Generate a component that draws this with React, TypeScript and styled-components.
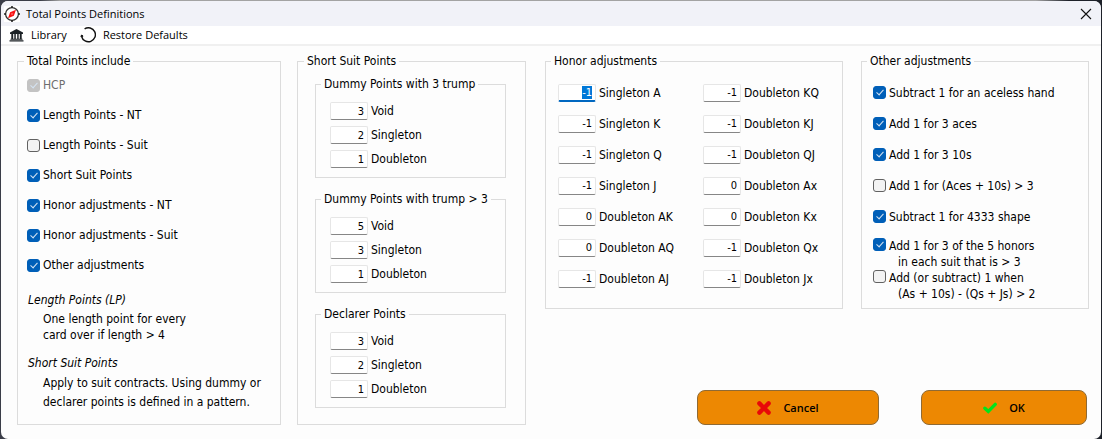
import React, { useEffect, useId, useRef } from "react";
import styled, { createGlobalStyle } from "styled-components";

const GlobalStyle = createGlobalStyle`
  *, *::before, *::after { box-sizing: border-box; }
  body {
    margin: 0;
    color: #000;
    font-family: "DejaVu Sans Condensed", "DejaVu Sans", sans-serif;
    font-size: 12px;
    line-height: 16px;
  }
`;

const uiFont = `"Open Sans", "Noto Sans", sans-serif`;

const Desktop = styled.div`
  min-height: 100vh;
  display: flex;
  padding: 1px;
  background: linear-gradient(90deg, #3a3d48 0, #3a3d48 40px, #a3a3a3 60px, #a3a3a3 94%, #1d2129 97%);
`;

const Window = styled.main`
  flex: 1;
  min-width: 0;
  display: flex;
  flex-direction: column;
  overflow: hidden;
  border-radius: 7px;
  background: #fdfdfd;
`;

const TitleBar = styled.header`
  display: flex;
  align-items: center;
  gap: 6px;
  height: 25px;
  padding: 0 9px 0 3px;
  background: #f1f2f8;
  font-family: ${uiFont};
`;

const Title = styled.h1`
  flex: 1;
  margin: 0;
  font-size: 11px;
  font-weight: 400;
`;

const PlainButton = styled.button`
  display: flex;
  align-items: center;
  gap: 7px;
  padding: 0;
  border: 0;
  background: none;
  color: inherit;
  font: inherit;
`;

const MenuBar = styled.nav`
  display: flex;
  align-items: center;
  gap: 13px;
  height: 20px;
  padding-left: 8px;
  border-bottom: 2px solid #f0f0f0;
  background: #fff;
  font-family: ${uiFont};
  font-size: 11px;
`;

const Content = styled.div`
  flex: 1;
  display: grid;
  grid-template-columns: minmax(0, 509fr) minmax(0, 544fr);
  gap: 19px;
  padding: 7px 12px 14px 16px;
`;

const LeftPanels = styled.div`
  display: grid;
  grid-template-columns: minmax(0, 264fr) minmax(0, 229fr);
  gap: 16px;
`;

const RightSide = styled.div`
  display: flex;
  flex-direction: column;
  justify-content: space-between;
`;

const RightPanels = styled.div`
  display: grid;
  grid-template-columns: minmax(0, 298fr) minmax(0, 228fr);
  gap: 18px;
`;

const Group = styled.fieldset<{ $pad: string }>`
  min-width: 0;
  margin: 0;
  padding: ${(p) => p.$pad};
  border: 1px solid #dcdcdc;
`;

const Legend = styled.legend<{ $shift?: number }>`
  margin-left: ${(p) => p.$shift ?? 0}px;
  padding: 0 3px;
  line-height: 16px;
  white-space: nowrap;
`;

const CheckRow = styled.label<{ $height: number; $muted?: boolean }>`
  display: flex;
  align-items: center;
  gap: 3px;
  height: ${(p) => p.$height}px;
  color: ${(p) => (p.$muted ? "#6d6d6d" : "#000")};
  white-space: nowrap;
`;

const TallCheckRow = styled(CheckRow)`
  align-items: flex-start;
`;

const TallCheckList = styled.div`
  padding-top: 6px;
`;

const SecondLine = styled.span`
  display: block;
  padding-left: 9px;
`;

const Box = styled.input`
  appearance: none;
  flex: none;
  display: flex;
  align-items: center;
  justify-content: center;
  width: 13px;
  height: 13px;
  margin: 0;
  border: 1px solid #626262;
  border-radius: 3px;
  background: #f3f3f3;

  &:checked {
    border-color: #005fb8;
    background: #005fb8;
  }
  &:checked::before {
    content: "";
    width: 4px;
    height: 7px;
    margin-bottom: 2px;
    border: solid #d5e4f3;
    border-width: 0 1px 1px 0;
    transform: rotate(42deg);
  }
  &:disabled {
    border-color: #c3c3c3;
    background: #c3c3c3;
  }
`;

const NoteHeading = styled.h2`
  margin: 12px 0 3px 1px;
  font-size: 12px;
  font-weight: 400;
  font-style: italic;
`;

const Note = styled.p<{ $line: number }>`
  margin: 0;
  padding-left: 16px;
  line-height: ${(p) => p.$line}px;
  white-space: nowrap;
`;

const Stack = styled.div`
  display: grid;
  gap: 13px;
`;

const HonorGrid = styled.div`
  display: grid;
  grid-template-columns: minmax(0, 145fr) minmax(0, 139fr);
`;

const FieldRow = styled.div<{ $height: number }>`
  display: flex;
  align-items: center;
  gap: 3px;
  height: ${(p) => p.$height}px;
  white-space: nowrap;
`;

const NumberBox = styled.input`
  flex: none;
  width: 38px;
  height: 18px;
  padding: 0 3px;
  border: 1px solid #e6e6e6;
  border-bottom-color: #868686;
  border-radius: 2px;
  outline: 0;
  background: #fff;
  color: #000;
  font-family: inherit;
  font-size: 11px;
  text-align: right;

  &:focus {
    border-bottom: 2px solid #0067c0;
  }
  &::selection {
    background: #0078d7;
    color: #fff;
  }
`;

const Actions = styled.div`
  display: flex;
  justify-content: flex-end;
  gap: 42px;
  padding-right: 2px;
`;

const ActionButton = styled.button<{ $width: number }>`
  display: flex;
  align-items: center;
  justify-content: center;
  gap: 12px;
  width: ${(p) => p.$width}px;
  height: 35px;
  border: 1px solid #8f6a35;
  border-radius: 8px;
  background: #ed8802;
  color: #000;
  font-family: ${uiFont};
  font-size: 11px;
  font-weight: 600;
`;

const CompassIcon = () => (
  <svg width="16" height="16" viewBox="0 0 16 16" aria-hidden="true">
    <rect width="16" height="16" fill="#fff" />
    <circle cx="8" cy="8" r="6.4" fill="none" stroke="#333" strokeWidth="1.3" />
    <path d="M8 0v2M8 14v2M0 8h2M14 8h2" stroke="#222" strokeWidth="1.6" />
    <path d="M12 3.8 9.9 9.7 4 12.2 6.1 6.3Z" fill="#f81414" />
    <circle cx="8" cy="8" r=".7" fill="#fbb" />
  </svg>
);

const LibraryIcon = () => (
  <svg width="15" height="13" viewBox="0 0 15 13" fill="#1c2226" aria-hidden="true">
    <path d="M7.5 0 14 3.4V5H1V3.4Z" />
    <path d="M2.3 5h1.9v5H2.3zM5.3 5h1.5v5H5.3zM8.2 5h1.5v5H8.2zM10.8 5h1.9v5h-1.9z" />
    <path d="M1.5 9.7h12v1.1h-12zM.5 11.2h14v1.3H.5z" />
  </svg>
);

const RestoreIcon = () => (
  <svg width="16" height="16" viewBox="0 0 16 16" fill="none" stroke="#111" aria-hidden="true">
    <path d="M4.6 1.9A7 7 0 1 1 1.6 9.5" strokeWidth="1.4" />
    <path d="M.8 9.4 1.7 8l1.4 1.2Z" fill="#111" strokeWidth="1" />
  </svg>
);

const CloseIcon = () => (
  <svg width="12" height="12" viewBox="0 0 12 12" stroke="#111" strokeWidth="1.1" aria-hidden="true">
    <path d="M1 1l10 10M11 1 1 11" />
  </svg>
);

const CrossIcon = () => (
  <svg width="14" height="14" viewBox="0 0 14 14" stroke="#e80808" strokeWidth="4.4" strokeLinecap="round" aria-hidden="true">
    <path d="M2.4 2.4l9.2 9.2M11.6 2.4l-9.2 9.2" />
  </svg>
);

const TickIcon = () => (
  <svg width="14" height="14" viewBox="0 0 14 14" fill="none" stroke="#00e51c" strokeWidth="3.4" strokeLinecap="round" aria-hidden="true">
    <path d="M1.9 7.2 5.3 10.4 12.2 3.4" />
  </svg>
);

const included = [
  { label: "HCP", on: true, disabled: true },
  { label: "Length Points - NT", on: true },
  { label: "Length Points - Suit", on: false },
  { label: "Short Suit Points", on: true },
  { label: "Honor adjustments - NT", on: true },
  { label: "Honor adjustments - Suit", on: true },
  { label: "Other adjustments", on: true },
];

const shortSuit = [
  { title: "Dummy Points with 3 trump", values: [3, 2, 1] },
  { title: "Dummy Points with trump > 3", values: [5, 3, 1] },
  { title: "Declarer Points", values: [3, 2, 1] },
];
const shortSuitLabels = ["Void", "Singleton", "Doubleton"];

const honors: [string, number][] = [
  ["Singleton A", -1], ["Doubleton KQ", -1],
  ["Singleton K", -1], ["Doubleton KJ", -1],
  ["Singleton Q", -1], ["Doubleton QJ", -1],
  ["Singleton J", -1], ["Doubleton Ax", 0],
  ["Doubleton AK", 0], ["Doubleton Kx", 0],
  ["Doubleton AQ", 0], ["Doubleton Qx", -1],
  ["Doubleton AJ", -1], ["Doubleton Jx", -1],
];

const others: [string, boolean][] = [
  ["Subtract 1 for an aceless hand", true],
  ["Add 1 for 3 aces", true],
  ["Add 1 for 3 10s", true],
  ["Add 1 for (Aces + 10s) > 3", false],
  ["Subtract 1 for 4333 shape", true],
];

const tallOthers: [string, string, boolean][] = [
  ["Add 1 for 3 of the 5 honors", "in each suit that is > 3", true],
  ["Add (or subtract) 1 when", "(As + 10s) - (Qs + Js) > 2", false],
];

type FieldProps = { label: string; value: number; height: number; selected?: boolean };

function Field({ label, value, height, selected }: FieldProps) {
  const id = useId();
  const ref = useRef<HTMLInputElement>(null);
  useEffect(() => {
    if (selected) {
      ref.current?.focus();
      ref.current?.select();
    }
  }, [selected]);
  return (
    <FieldRow $height={height}>
      <NumberBox id={id} ref={ref} type="text" inputMode="numeric" defaultValue={value} />
      <label htmlFor={id}>{label}</label>
    </FieldRow>
  );
}

export default function App() {
  return (
    <Desktop>
      <GlobalStyle />
      <Window>
        <TitleBar>
          <CompassIcon />
          <Title>Total Points Definitions</Title>
          <PlainButton type="button" aria-label="Close"><CloseIcon /></PlainButton>
        </TitleBar>
        <MenuBar>
          <PlainButton type="button"><LibraryIcon />Library</PlainButton>
          <PlainButton type="button"><RestoreIcon />Restore Defaults</PlainButton>
        </MenuBar>
        <Content>
          <LeftPanels>
            <Group $pad="1px 0 12px 9px">
              <Legend $shift={-3}>Total Points include</Legend>
              {included.map((item) => (
                <CheckRow key={item.label} $height={30} $muted={item.disabled}>
                  <Box type="checkbox" defaultChecked={item.on} disabled={item.disabled} />
                  {item.label}
                </CheckRow>
              ))}
              <NoteHeading>Length Points (LP)</NoteHeading>
              <Note $line={16}>One length point for every<br />card over if length &gt; 4</Note>
              <NoteHeading>Short Suit Points</NoteHeading>
              <Note $line={19}>Apply to suit contracts. Using dummy or<br />declarer points is defined in a pattern.</Note>
            </Group>
            <Group $pad="7px 19px 15px 17px">
              <Legend $shift={-11}>Short Suit Points</Legend>
              <Stack>
                {shortSuit.map((group) => (
                  <Group key={group.title} $pad="7px 0 6px 14px">
                    <Legend $shift={-9}>{group.title}</Legend>
                    {group.values.map((value, i) => (
                      <Field key={shortSuitLabels[i]} label={shortSuitLabels[i]} value={value} height={24} />
                    ))}
                  </Group>
                ))}
              </Stack>
            </Group>
          </LeftPanels>
          <RightSide>
            <RightPanels>
              <Group $pad="8px 0 14px 12px">
                <Legend $shift={-7}>Honor adjustments</Legend>
                <HonorGrid>
                  {honors.map(([label, value], i) => (
                    <Field key={label} label={label} value={value} height={31} selected={i === 0} />
                  ))}
                </HonorGrid>
              </Group>
              <Group $pad="8px 0 6px 11px">
                <Legend $shift={-6}>Other adjustments</Legend>
                {others.map(([label, on]) => (
                  <CheckRow key={label} $height={31}>
                    <Box type="checkbox" defaultChecked={on} />
                    {label}
                  </CheckRow>
                ))}
                <TallCheckList>
                  {tallOthers.map(([first, second, on]) => (
                    <TallCheckRow key={first} $height={32}>
                      <Box type="checkbox" defaultChecked={on} />
                      <span>{first}<SecondLine>{second}</SecondLine></span>
                    </TallCheckRow>
                  ))}
                </TallCheckList>
              </Group>
            </RightPanels>
            <Actions>
              <ActionButton type="button" $width={182}><CrossIcon />Cancel</ActionButton>
              <ActionButton type="button" $width={166}><TickIcon />OK</ActionButton>
            </Actions>
          </RightSide>
        </Content>
      </Window>
    </Desktop>
  );
}
